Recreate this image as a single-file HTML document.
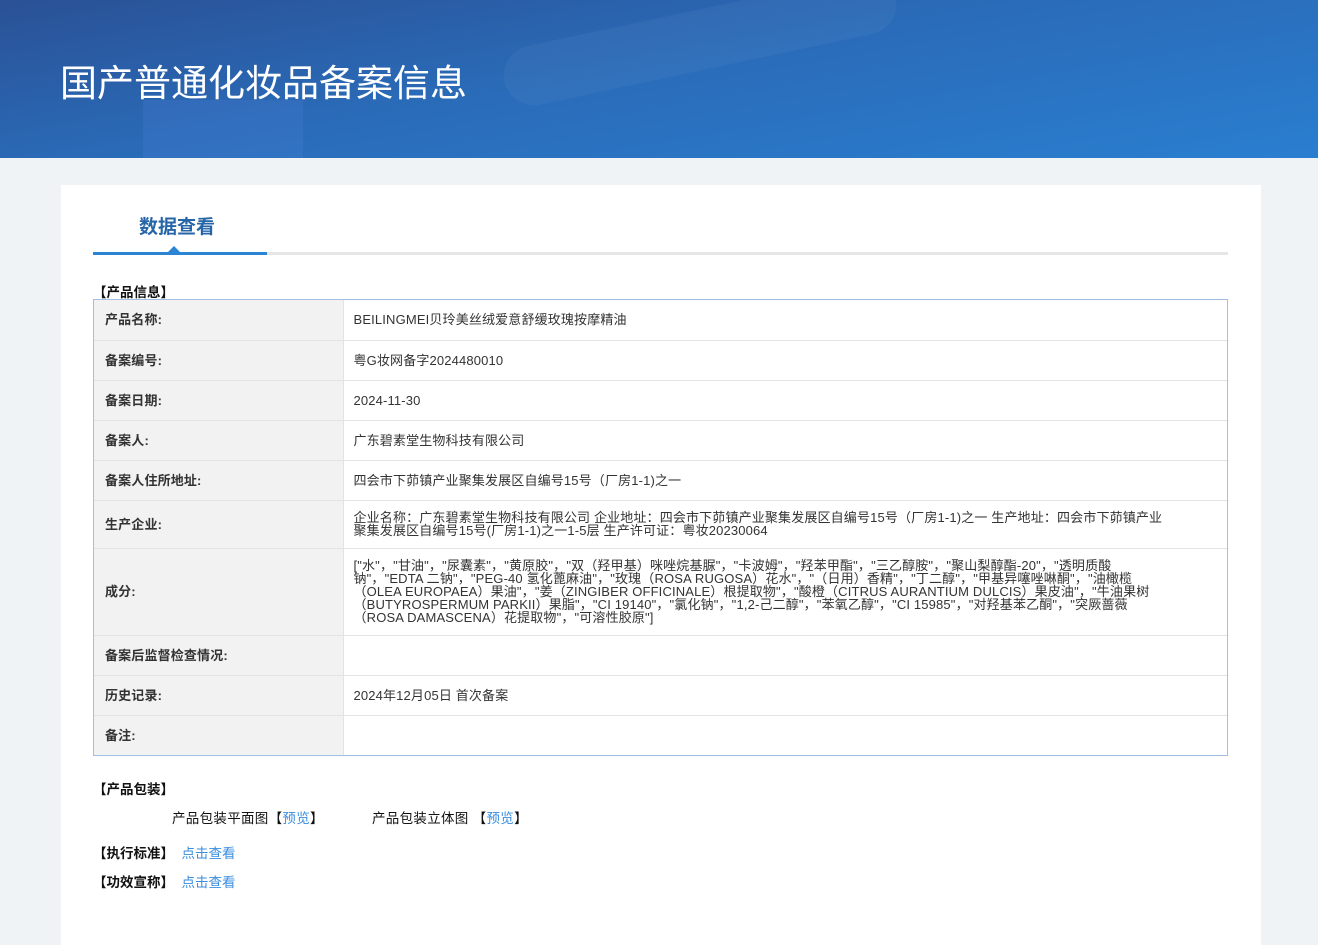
<!DOCTYPE html>
<html><head><meta charset="utf-8"><style>
*{margin:0;padding:0;box-sizing:border-box}
body{width:1318px;height:929px;overflow:hidden;background:#eff3f6;font-family:"Liberation Sans","Noto Sans CJK SC",sans-serif;color:#333;position:relative}
.hdr{position:absolute;left:0;top:0;width:1318px;height:158px;background:linear-gradient(170deg,#2a5196 0%,#2a6bb8 45%,#2a7ed0 100%);overflow:hidden}
.hdr .s1{position:absolute;left:143px;top:100px;width:160px;height:60px;background:rgba(90,140,230,.18)}
.hdr .s2{position:absolute;left:500px;top:10px;width:400px;height:60px;border-radius:40px;background:rgba(255,255,255,.04);transform:rotate(-12deg)}
.hdr h1{position:absolute;left:60px;top:60px;font-size:37px;font-weight:normal;color:#fff;line-height:48px}
.card{position:absolute;left:61px;top:185px;width:1200px;height:760px;background:#fff}
.tab{position:absolute;left:139px;top:212px;font-size:19px;font-weight:bold;color:#2565a8}
.line{position:absolute;left:93px;top:252px;width:1135px;height:3px;background:#e6e6e6}
.line i{position:absolute;left:0;top:0;width:174px;height:3px;background:#2b84d4}
.tri{position:absolute;left:168px;top:246px;width:0;height:0;border-left:6px solid transparent;border-right:6px solid transparent;border-bottom:6px solid #2b84d4}
.sec{position:absolute;left:93px;font-size:13.5px;font-weight:bold;color:#111}
.tw{position:absolute;left:93px;top:299px;width:1135px;border:1px solid #a3bfe2}
table{width:100%;border-collapse:collapse;font-size:13px;letter-spacing:0.15px}
td{border-bottom:1px solid #e3e3e3;vertical-align:middle;line-height:13px}
tr:last-child td{border-bottom:none}
td.l{width:249px;background:#f2f2f2;font-weight:bold;padding-left:11px;color:#333;border-right:1px solid #e3e3e3}
td.v{padding-left:10px;padding-right:64px;color:#333}
a{color:#3a8ee0;text-decoration:none}
.p{position:absolute;font-size:13.5px;color:#111;letter-spacing:0.3px}
</style></head><body>
<div class="hdr"><div class="s1"></div><div class="s2"></div><h1>国产普通化妆品备案信息</h1></div>
<div class="card"></div>
<div class="tab">数据查看</div>
<div class="line"><i></i></div><div class="tri"></div>
<div class="sec" style="top:281px">【产品信息】</div>
<div class="tw"><table>
<tr style="height:40px"><td class="l">产品名称:</td><td class="v">BEILINGMEI贝玲美丝绒爱意舒缓玫瑰按摩精油</td></tr>
<tr style="height:40px"><td class="l">备案编号:</td><td class="v">粤G妆网备字2024480010</td></tr>
<tr style="height:40px"><td class="l">备案日期:</td><td class="v">2024-11-30</td></tr>
<tr style="height:40px"><td class="l">备案人:</td><td class="v">广东碧素堂生物科技有限公司</td></tr>
<tr style="height:40px"><td class="l">备案人住所地址:</td><td class="v">四会市下茆镇产业聚集发展区自编号15号（厂房1-1)之一</td></tr>
<tr style="height:48px"><td class="l">生产企业:</td><td class="v">企业名称：广东碧素堂生物科技有限公司 企业地址：四会市下茆镇产业聚集发展区自编号15号（厂房1-1)之一 生产地址：四会市下茆镇产业聚集发展区自编号15号(厂房1-1)之一1-5层 生产许可证：粤妆20230064</td></tr>
<tr style="height:87px"><td class="l">成分:</td><td class="v">["水"，"甘油"，"尿囊素"，"黄原胶"，"双（羟甲基）咪唑烷基脲"，"卡波姆"，"羟苯甲酯"，"三乙醇胺"，"聚山梨醇酯-20"，"透明质酸钠"，"EDTA 二钠"，"PEG-40 氢化蓖麻油"，"玫瑰（ROSA RUGOSA）花水"，"（日用）香精"，"丁二醇"，"甲基异噻唑啉酮"，"油橄榄（OLEA EUROPAEA）果油"，"姜（ZINGIBER OFFICINALE）根提取物"，"酸橙（CITRUS AURANTIUM DULCIS）果皮油"，"牛油果树（BUTYROSPERMUM PARKII）果脂"，"CI 19140"，"氯化钠"，"1,2-己二醇"，"苯氧乙醇"，"CI 15985"，"对羟基苯乙酮"，"突厥蔷薇（ROSA DAMASCENA）花提取物"，"可溶性胶原"]</td></tr>
<tr style="height:40px"><td class="l">备案后监督检查情况:</td><td class="v"></td></tr>
<tr style="height:40px"><td class="l">历史记录:</td><td class="v">2024年12月05日 首次备案</td></tr>
<tr style="height:40px"><td class="l">备注:</td><td class="v"></td></tr>
</table></div>
<div class="sec" style="top:778px">【产品包装】</div>
<div class="p" style="left:172px;top:807px">产品包装平面图【<a>预览</a>】</div>
<div class="p" style="left:372px;top:807px">产品包装立体图 【<a>预览</a>】</div>
<div class="sec" style="top:842px">【执行标准】 &nbsp;<a style="font-weight:normal">点击查看</a></div>
<div class="sec" style="top:871px">【功效宣称】 &nbsp;<a style="font-weight:normal">点击查看</a></div>
</body></html>
